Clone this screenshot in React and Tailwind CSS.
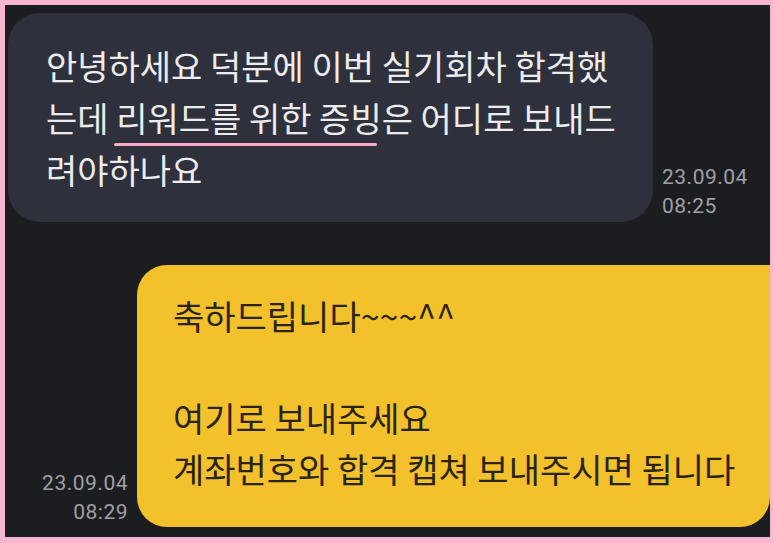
export default function App() {
  const ko = { fontFamily: '"Noto Sans CJK KR", "Noto Sans", sans-serif' }
  const num = { fontFamily: 'Roboto, "Liberation Sans", sans-serif' }

  return (
    <div className="w-[773px] h-[543px] bg-[#f7b6d0] pt-[5px] pl-[5px] pr-[3px] pb-[6px]">
      <div className="w-full h-full bg-[#1c1d20] overflow-hidden flex flex-col">
        <div className="flex items-end gap-[9px] ml-[3px] mt-[8px]">
          <div className="w-[645px] h-[209px] shrink-0 rounded-[32px] bg-[#2e313c] pl-[38px] pt-[27px] text-[34px] leading-[52px] text-[#ececee]" style={ko}>
            <div>안녕하세요 덕분에 이번 실기회차 합격했</div>
            <div>
              는데{' '}
              <span className="relative">
                리워드를 위한 증빙
                <span className="absolute left-[-2px] right-[5px] bottom-[-4px] h-[3px] rounded-full bg-[#f7a9c6]"></span>
              </span>
              은 어디로 보내드
            </div>
            <div>려야하나요</div>
          </div>
          <div className="text-[21px] leading-[29px] tracking-[0.5px] text-[#a0a0a4] pb-[1px]" style={num}>
            <div>23.09.04</div>
            <div>08:25</div>
          </div>
        </div>

        <div className="flex items-end gap-[9px] mt-[43px]">
          <div className="w-[123px] shrink-0 text-right text-[21px] leading-[29px] tracking-[0.5px] text-[#a0a0a4]" style={num}>
            <div>23.09.04</div>
            <div>08:29</div>
          </div>
          <div className="flex-1 h-[262px] rounded-[30px] rounded-tr-none bg-[#f3c12b] pl-[36px] pt-[25px] text-[34px] leading-[51px] text-[#2a2415]" style={ko}>
            <div>축하드립니다~~~^^</div>
            <div>&nbsp;</div>
            <div>여기로 보내주세요</div>
            <div>계좌번호와 합격 캡쳐 보내주시면 됩니다</div>
          </div>
        </div>
      </div>
    </div>
  )
}
